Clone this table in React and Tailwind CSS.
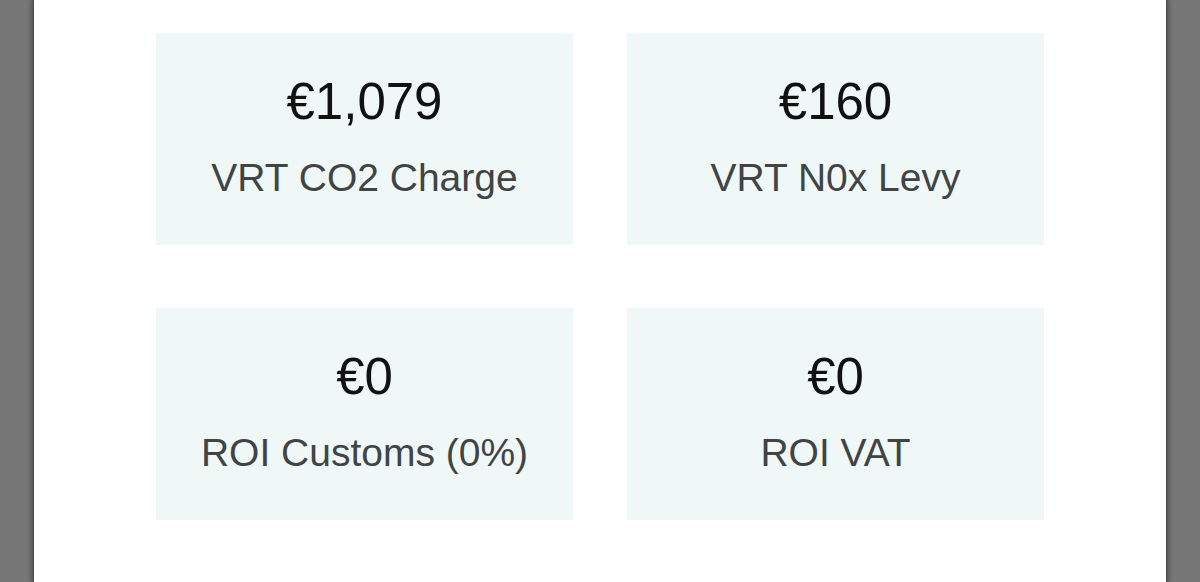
import React from "react";

const items = [
  { amount: "€1,079", label: "VRT CO2 Charge" },
  { amount: "€160", label: "VRT N0x Levy" },
  { amount: "€0", label: "ROI Customs (0%)" },
  { amount: "€0", label: "ROI VAT" },
];

export default function App() {
  return (
    <div
      className="w-[1200px] h-[582px] bg-[#777777] flex justify-center overflow-hidden"
      style={{ fontFamily: '"Liberation Sans", Arial, Helvetica, sans-serif' }}
    >
      <div className="w-[1132px] h-full bg-white shadow-[0_0_5px_2px_rgba(0,0,0,0.45)] pt-[33px] px-[122px]">
        <div className="grid grid-cols-2 gap-x-[54px] gap-y-[63px]">
          {items.map((it, i) => (
            <div
              key={i}
              className="h-[212px] bg-[#f0f7f7] flex flex-col items-center pt-[40px]"
            >
              <div className="text-[51px] leading-[58px] text-[#111111]">{it.amount}</div>
              <div className="mt-[25px] text-[39px] leading-[44px] text-[#404444]">{it.label}</div>
            </div>
          ))}
        </div>
      </div>
    </div>
  );
}
